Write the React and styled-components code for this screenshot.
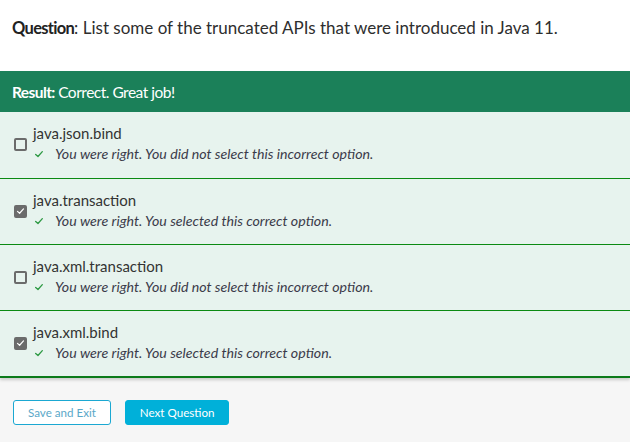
import React from 'react';
import styled, { createGlobalStyle } from 'styled-components';

const GlobalStyle = createGlobalStyle`
  html, body { margin: 0; padding: 0; }
  body {
    font-family: Lato, "Open Sans", Arial, sans-serif;
    background: #f6f6f6;
    width: 630px;
    height: 442px;
    overflow: hidden;
  }
`;

const Page = styled.div`
  display: flex;
  flex-direction: column;
  height: 442px;
`;

const QuestionBar = styled.div`
  background: #fff;
  height: 71px;
  padding: 17px 12px 0;
  box-sizing: border-box;
  font-size: 17px;
  line-height: 22px;
  color: #2e2e2e;
  b { font-size: 16.5px; font-weight: 700; color: #222; letter-spacing: -0.7px; }
`;

const Panel = styled.div`
  background: #e7f3ee;
  border-bottom: 2px solid #0b7a1a;
  box-shadow: 0 2px 3px rgba(0, 0, 0, 0.18);
`;

const ResultHeader = styled.div`
  background: #1b8059;
  color: #fff;
  height: 41px;
  padding: 0 12px;
  display: flex;
  align-items: center;
  font-size: 15.5px;
  letter-spacing: -0.5px;
  white-space: pre;
  b { font-weight: 700; letter-spacing: -0.6px; }
`;

const Option = styled.div`
  display: flex;
  align-items: center;
  padding: 11px 0 12px 14px;
  border-top: ${p => (p.$first ? 'none' : '1px solid #0b8a12')};
  ${p => p.$first && 'padding-bottom: 13px;'}
`;

const Box = styled.span`
  width: 13px;
  height: 13px;
  box-sizing: border-box;
  border: 2px solid #6b6b6b;
  border-radius: 2px;
  background: ${p => (p.$checked ? '#6b6b6b' : 'transparent')};
  display: flex;
  align-items: center;
  justify-content: center;
  margin-right: 6px;
  flex-shrink: 0;
`;

const Texts = styled.div`
  display: flex;
  flex-direction: column;
`;

const Title = styled.div`
  font-size: 15px;
  line-height: 20px;
  color: #333;
`;

const Feedback = styled.div`
  display: flex;
  align-items: center;
  font-size: 14.2px;
  line-height: 22px;
  font-style: italic;
  color: #3b3b4a;
  svg { margin: 0 11px 0 1px; }
`;

const Footer = styled.div`
  display: flex;
  gap: 14px;
  padding: 22px 13px 0;
`;

const Button = styled.button`
  height: 25px;
  box-sizing: border-box;
  padding: 0 14px;
  border-radius: 3px;
  font-family: Lato, Arial, sans-serif;
  font-size: 11.6px;
  font-weight: 400;
  border: 1px solid ${p => (p.$primary ? '#00b0d9' : '#1ba8d2')};
  background: ${p => (p.$primary ? '#00b0d9' : '#fff')};
  color: ${p => (p.$primary ? '#fff' : '#5aa8c8')};
`;

const Tick = ({ color, size }) => (
  <svg width={size} height={size} viewBox="0 0 12 12" fill="none">
    <path d="M2 6.5 L4.8 9 L10 3.2" stroke={color} strokeWidth="1.6" strokeLinecap="round" strokeLinejoin="round" />
  </svg>
);

const options = [
  { label: 'java.json.bind', checked: false, note: 'You were right. You did not select this incorrect option.' },
  { label: 'java.transaction', checked: true, note: 'You were right. You selected this correct option.' },
  { label: 'java.xml.transaction', checked: false, note: 'You were right. You did not select this incorrect option.' },
  { label: 'java.xml.bind', checked: true, note: 'You were right. You selected this correct option.' },
];

export default function App() {
  return (
    <Page>
      <GlobalStyle />
      <QuestionBar>
        <b>Question</b>: List some of the truncated APIs that were introduced in Java 11.
      </QuestionBar>
      <Panel>
        <ResultHeader>
          <b>Result:</b> Correct. Great job!
        </ResultHeader>
        {options.map((o, i) => (
          <Option key={o.label} $first={i === 0}>
            <Box $checked={o.checked}>
              {o.checked && <Tick color="#fff" size={10} />}
            </Box>
            <Texts>
              <Title>{o.label}</Title>
              <Feedback>
                <Tick color="#2e9a44" size={10} />
                {o.note}
              </Feedback>
            </Texts>
          </Option>
        ))}
      </Panel>
      <Footer>
        <Button>Save and Exit</Button>
        <Button $primary>Next Question</Button>
      </Footer>
    </Page>
  );
}
